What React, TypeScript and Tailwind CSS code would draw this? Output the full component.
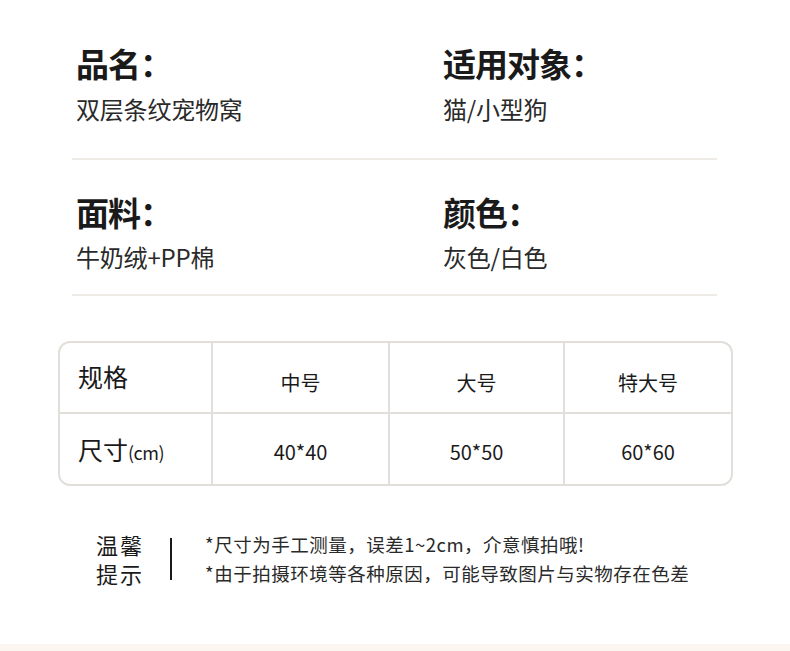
import React from "react";

const info = [
  [
    { label: "品名：", value: "双层条纹宠物窝" },
    { label: "适用对象：", value: "猫/小型狗" },
  ],
  [
    { label: "面料：", value: "牛奶绒+PP棉" },
    { label: "颜色：", value: "灰色/白色" },
  ],
];

const sizes = [
  { name: "中号", dim: "40*40" },
  { name: "大号", dim: "50*50" },
  { name: "特大号", dim: "60*60" },
];

export default function App(): React.JSX.Element {
  return (
    <div className="w-[790px] h-[651px] bg-white flex flex-col overflow-hidden font-['Noto_Sans_CJK_SC',sans-serif] text-[#1a1a1a]">
      {/* Info rows */}
      <section className="pl-[72px]">
        {/* row 1 */}
        <div className="grid grid-cols-[367px_1fr] pl-[4px] pt-[44px]">
          {info[0].map((it) => (
            <div key={it.label}>
              <h3 className="text-[33px] font-bold leading-[38px] tracking-[-1px]">{it.label}</h3>
              <p className="mt-[11px] text-[24px] leading-[32px] text-[#2a2a2a] tracking-[-0.2px]">{it.value}</p>
            </div>
          ))}
        </div>
        <div className="mt-[33px] h-[2px] w-[645px] bg-[#efece7]" />
        {/* row 2 */}
        <div className="grid grid-cols-[367px_1fr] pl-[4px] pt-[33px]">
          {info[1].map((it) => (
            <div key={it.label}>
              <h3 className="text-[33px] font-bold leading-[38px] tracking-[-1px]">{it.label}</h3>
              <p className="mt-[10px] text-[24px] leading-[32px] text-[#2a2a2a] tracking-[-0.2px]">{it.value}</p>
            </div>
          ))}
        </div>
        <div className="mt-[21px] h-[2px] w-[645px] bg-[#efece7]" />
      </section>

      {/* Size table */}
      <div className="ml-[58px] mt-[45px] w-[675px] rounded-[12px] border-2 border-[#e2dfda] overflow-hidden">
        <div className="grid grid-cols-[151px_177px_175px_1fr] h-[69px]">
          <div className="flex items-center pl-[18px] text-[25px] leading-none pb-[2px]">规格</div>
          {sizes.map((s) => (
            <div key={s.name} className="border-l-2 border-[#e2dfda] flex items-center justify-center pt-[10px] text-[20px] leading-none">
              {s.name}
            </div>
          ))}
        </div>
        <div className="grid grid-cols-[151px_177px_175px_1fr] h-[72px] border-t-2 border-[#e2dfda]">
          <div className="flex items-center pl-[18px]">
            <p className="leading-none">
              <span className="text-[25px]">尺寸</span>
              <span className="text-[18px] tracking-[-0.5px]">(cm)</span>
            </p>
          </div>
          {sizes.map((s) => (
            <div key={s.dim} className="border-l-2 border-[#e2dfda] flex items-center justify-center pt-[6px] text-[20px] leading-none">
              {s.dim}
            </div>
          ))}
        </div>
      </div>

      {/* Tips */}
      <div className="ml-[96px] mt-[44px] flex items-center">
        <div className="text-[22px] leading-[29px] tracking-[2px]">
          <p>温馨</p>
          <p>提示</p>
        </div>
        <div className="ml-[26px] w-[2px] h-[42px] bg-[#1a1a1a]" />
        <div className="ml-[33px] text-[18.5px] leading-[29px] text-[#2a2a2a] tracking-[0.5px]">
          <p>*尺寸为手工测量，误差1~2cm，介意慎拍哦!</p>
          <p>*由于拍摄环境等各种原因，可能导致图片与实物存在色差</p>
        </div>
      </div>

      <div className="mt-auto h-[7px] bg-[#fbf6ef]" />
    </div>
  );
}
